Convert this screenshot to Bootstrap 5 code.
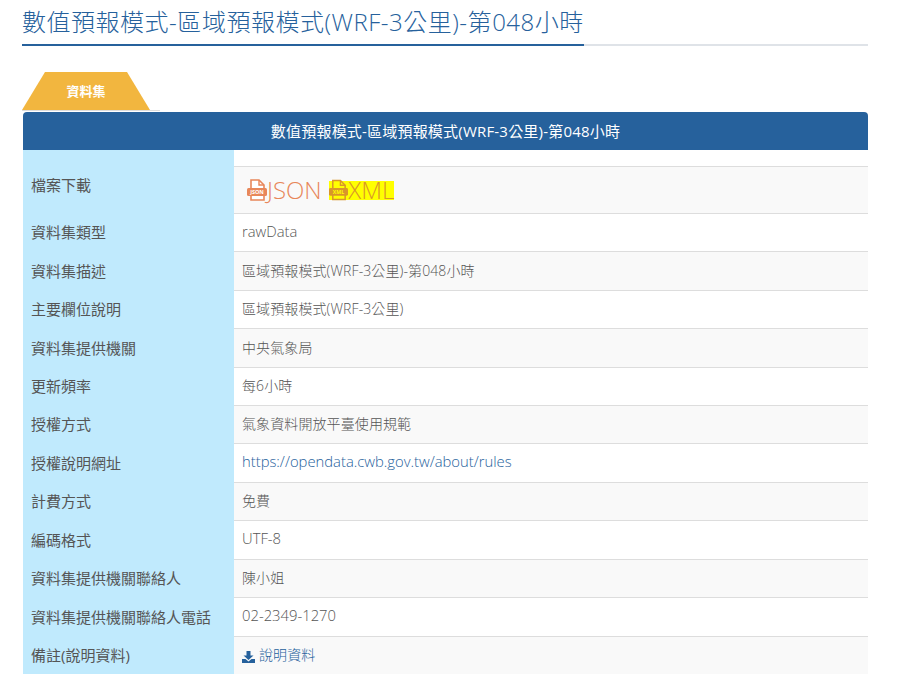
<!DOCTYPE html>
<html lang="zh-Hant">
<head>
<meta charset="utf-8">
<title>數值預報模式</title>
<link href="https://cdn.jsdelivr.net/npm/bootstrap@5.3.0/dist/css/bootstrap.min.css" rel="stylesheet">
<style>
body{font-family:"Open Sans","Noto Sans CJK TC",sans-serif;color:#555;background:#fff;overflow:hidden;height:682px}
.page-wrap{padding:0 44px 0 22px}
.title-bar{border-bottom:2px solid #dfe3e8;height:46px}
.title-text{display:inline-block;height:46px;border-bottom:2px solid #26619c;color:#26619c;font-size:24px;letter-spacing:.52px;line-height:44px;font-weight:300;white-space:nowrap}
.tab-bar{margin-top:26px;width:138px;height:39px;border-bottom:1px solid #ddd}
.tab-shape{width:128px;height:38px;background:#f2b63f;clip-path:polygon(23px 0,105px 0,128px 100%,0 100%);color:#fff;font-size:13px;font-weight:700;text-align:center;line-height:38px}
.data-box{margin:1px 0 0 1px}
.data-head{background:#26619c;color:#fff;text-align:center;font-size:15px;letter-spacing:.2px;height:38px;line-height:38px;border-radius:4px 4px 0 0}
.data-table{table-layout:fixed;margin:0;font-size:15px;color:#555}
.data-table th{width:211px;background:#c0eafd;font-weight:400;color:#555;padding:0 8px;vertical-align:middle;border:0;box-shadow:none}
.data-table td{padding:0 8px;vertical-align:middle;border:0;border-top:1px solid #ddd;box-shadow:none;font-size:14px;letter-spacing:.1px;font-weight:300;color:#555}
.data-table tr{height:38px}
.data-table tr.row-tall{height:39px}
.data-table tr.gap-row{height:16px}
.data-table tr.gap-row td{border-top:0;padding:0;background:#fff}
.data-table tr.file-row{height:47px}
.data-table tr.file-row th{padding-bottom:9px}
.data-table tr.file-row td{padding-left:13px;letter-spacing:0}
.data-table tr th,.data-table tr td{line-height:20px}
.data-table tr.alt-row td{background:#f9f9f9}
.data-table td.latin-val{font-size:14.8px;letter-spacing:0;padding-bottom:3px}
.data-table a{color:#26619c;text-decoration:none}
.data-table a.file-link{font-size:24px;font-weight:300;color:#e8875a;display:inline-flex;align-items:center;vertical-align:middle;height:19px}
.data-table a.file-mark{background:#ffff00;color:#d9962a}
.doc-link{font-size:14px}
</style>
</head>
<body>
<div class="page-wrap">
  <div class="title-bar"><span class="title-text">數值預報模式-區域預報模式(WRF-3公里)-第048小時</span></div>
  <div class="tab-bar"><div class="tab-shape">資料集</div></div>
  <div class="data-box">
    <div class="data-head">數值預報模式-區域預報模式(WRF-3公里)-第048小時</div>
    <table class="table data-table">
      <tbody>
        <tr class="gap-row"><th></th><td></td></tr>
        <tr class="file-row alt-row"><th>檔案下載</th><td>
          <a class="file-link" href="#"><svg width="20" height="22" viewBox="0 0 20 22"><path d="M4 1h8l5 5v15H4z" fill="#fff" stroke="#e8875a" stroke-width="1.6"/><path d="M12 1v5h5" fill="none" stroke="#e8875a" stroke-width="1.4"/><rect x="0" y="9" width="20" height="8" rx="1.5" fill="#e8875a"/><text x="10" y="15.2" font-size="5.500" font-weight="700" text-anchor="middle" fill="#fff">JSON</text></svg>JSON</a>
          <a class="file-link file-mark ms-1" href="#"><svg width="19" height="22" viewBox="0 0 20 22"><path d="M4 1h8l5 5v15H4z" fill="none" stroke="#d9962a" stroke-width="1.6"/><path d="M12 1v5h5" fill="none" stroke="#d9962a" stroke-width="1.4"/><rect x="0" y="9" width="20" height="8" rx="1.5" fill="#d9962a"/><text x="10" y="15.2" font-size="5.500" font-weight="700" text-anchor="middle" fill="#ffff00">XML</text></svg>XML</a>
        </td></tr>
        <tr><th>資料集類型</th><td class="latin-val">rawData</td></tr>
        <tr class="alt-row row-tall"><th>資料集描述</th><td>區域預報模式(WRF-3公里)-第048小時</td></tr>
        <tr><th>主要欄位說明</th><td>區域預報模式(WRF-3公里)</td></tr>
        <tr class="alt-row row-tall"><th>資料集提供機關</th><td>中央氣象局</td></tr>
        <tr><th>更新頻率</th><td>每6小時</td></tr>
        <tr class="alt-row"><th>授權方式</th><td>氣象資料開放平臺使用規範</td></tr>
        <tr class="row-tall"><th>授權說明網址</th><td class="latin-val"><a href="#">https://opendata.cwb.gov.tw/about/rules</a></td></tr>
        <tr class="alt-row"><th>計費方式</th><td>免費</td></tr>
        <tr class="row-tall"><th>編碼格式</th><td class="latin-val">UTF-8</td></tr>
        <tr class="alt-row"><th>資料集提供機關聯絡人</th><td>陳小姐</td></tr>
        <tr class="row-tall"><th>資料集提供機關聯絡人電話</th><td class="latin-val">02-2349-1270</td></tr>
        <tr class="alt-row"><th>備註(說明資料)</th><td><a class="doc-link" href="#"><svg width="13" height="12" viewBox="0 0 13 12" class="me-1"><path d="M4.500 0h4v4.500h3L6.500 9l-5-4.500h3z" fill="#26619c"/><path d="M0 8h3.500l3 2.500L9.500 8H13v4H0z" fill="#26619c"/></svg>說明資料</a></td></tr>
      </tbody>
    </table>
  </div>
</div>
<script src="https://cdn.jsdelivr.net/npm/bootstrap@5.3.0/dist/js/bootstrap.bundle.min.js"></script>
</body>
</html>
